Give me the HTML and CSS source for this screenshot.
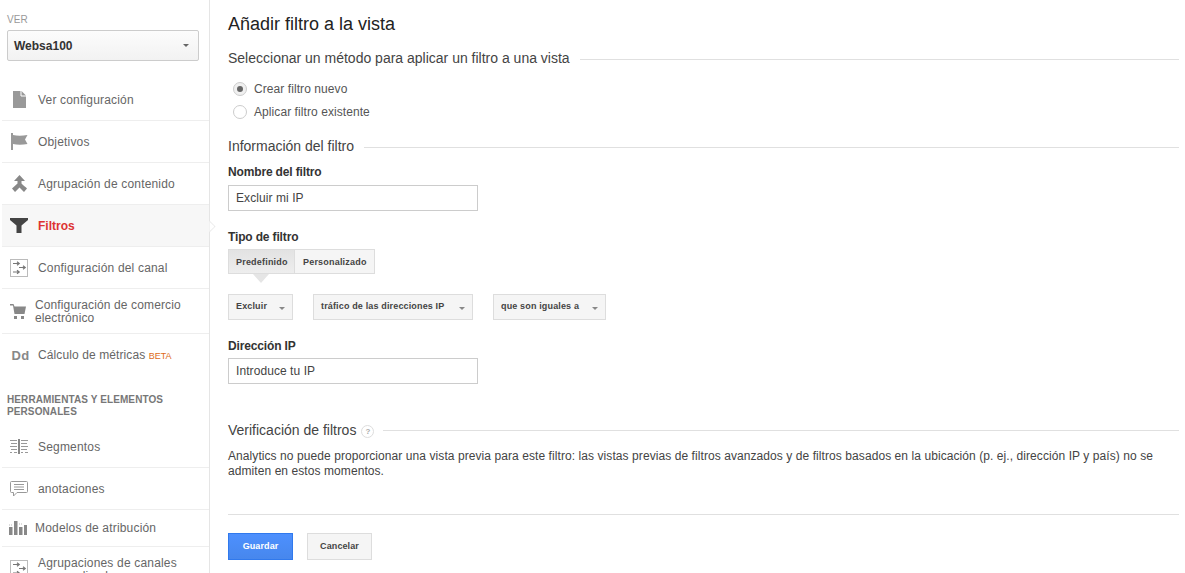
FILE: index.html
```html
<!DOCTYPE html>
<html lang="es">
<head>
<meta charset="utf-8">
<title>Añadir filtro a la vista</title>
<link rel="stylesheet" href="styles.css">
</head>
<body>
<div class="page">
  <aside class="sidebar">
    <div class="view-block">
      <div class="view-label">VER</div>
      <div class="view-select"><span>Websa100</span><i class="caret dark"></i></div>
    </div>
    <nav class="nav">
      <a class="row"><span class="ico"><svg width="13" height="17" viewBox="0 0 13 17"><path d="M0 0h8.500L13 4.500V17H0z" fill="#999"/><path d="M8 0v5h5" fill="none" stroke="#fff"/></svg></span><span class="lbl">Ver configuración</span></a>
      <a class="row"><span class="ico"><svg width="17" height="17" viewBox="0 0 17 17"><path d="M0 0h2v2c4 1 9 1 14.500 0l-2.500 4.500 2.500 4.500c-5 1-10.500 1-14.500 0v6H0z" fill="#999"/></svg></span><span class="lbl">Objetivos</span></a>
      <a class="row"><span class="ico"><svg width="15" height="17" viewBox="0 0 15 17"><path d="M7.500 0L13 6H9.500v2.500c2 2 4 3.500 5.500 5l-3 3.500-4.500-4.500L3 17 0 13.500l5.500-5V6H2z" fill="#888"/></svg></span><span class="lbl">Agrupación de contenido</span></a>
      <a class="row active"><span class="ico"><svg width="18" height="15" viewBox="0 0 18 15"><path d="M0 0h18v2l-6.500 5.500V15h-5V7.500L0 2z" fill="#444"/></svg></span><span class="lbl">Filtros</span></a>
      <a class="row"><span class="ico"><svg width="18" height="18" viewBox="0 0 18 18"><rect x=".5" y=".5" width="17" height="17" fill="#fff" stroke="#bbb"/><g fill="none" stroke="#777" stroke-width="1.200"><path d="M3 4.500h6M7 2.800l2.200 1.700L7 6.200"/><path d="M9 8.500h6M13 6.800l2.200 1.700L13 10.200"/><path d="M3 13h6M7 11.300l2.200 1.700L7 14.700"/></g></svg></span><span class="lbl">Configuración del canal</span></a>
      <a class="row tall"><span class="ico ico-narrow"><svg width="16" height="15" viewBox="0 0 16 15"><path d="M0 0h3.500l1 2.500H16L14.500 10h-10L3 1.500H0z" fill="#888"/><rect x="4" y="12" width="3" height="3" fill="#888"/><rect x="11" y="12" width="3" height="3" fill="#888"/></svg></span><span class="lbl">Configuración de comercio electrónico</span></a>
      <a class="row plain"><span class="ico dd">Dd</span><span class="lbl">Cálculo de métricas <em class="beta">BETA</em></span></a>
    </nav>
    <h4 class="tools">HERRAMIENTAS Y ELEMENTOS PERSONALES</h4>
    <nav class="nav">
      <a class="row"><span class="ico"><svg width="18" height="15" viewBox="0 0 18 15"><path d="M0 1.500h7M1 4.500h6M0 7.500h7M1 10.500h6M0 13.500h2M4 13.500h3M11 1.500h7M11 4.500h6M11 7.500h7M11 10.500h6M11 13.500h2M15 13.500h3" stroke="#999" fill="none"/><path d="M9 0v15" stroke="#888" stroke-width="2"/></svg></span><span class="lbl">Segmentos</span></a>
      <a class="row"><span class="ico"><svg width="18" height="16" viewBox="0 0 18 16"><path d="M1.500.5h15q1 0 1 1v9q0 1-1 1H7L3.500 15v-3.500h-2q-1 0-1-1v-9q0-1 1-1z" fill="#fff" stroke="#999"/><path d="M4 3.500h10M4 6h10M4 8.500h10" stroke="#999"/></svg></span><span class="lbl">anotaciones</span></a>
      <a class="row short"><span class="ico ico-narrow"><svg width="18" height="14" viewBox="0 0 18 14"><path d="M0 6h3.500v8H0zM5 0h3.500v14H5zM10 6h3.500v8H10zM15 4h3v10h-3z" fill="#888"/><path d="M0 4h3M10 3h3" stroke="#bbb" stroke-dasharray="1 1"/></svg></span><span class="lbl lbl-flat">Modelos de atribución</span></a>
      <a class="row last"><span class="ico"><svg width="18" height="18" viewBox="0 0 18 18"><rect x=".5" y=".5" width="17" height="17" fill="#fff" stroke="#bbb"/><g fill="none" stroke="#777" stroke-width="1.200"><path d="M3 4.500h6M7 2.800l2.200 1.700L7 6.200"/><path d="M9 8.500h6M13 6.800l2.200 1.700L13 10.200"/><path d="M3 13h6M7 11.300l2.200 1.700L7 14.700"/></g></svg></span><span class="lbl">Agrupaciones de canales personalizadas</span></a>
    </nav>
  </aside>
  <main class="main">
    <h1 class="title">Añadir filtro a la vista</h1>
    <div class="section s-method"><span>Seleccionar un método para aplicar un filtro a una vista</span></div>
    <div class="radios">
      <label class="radio"><i class="dot on"></i>Crear filtro nuevo</label>
      <label class="radio"><i class="dot"></i>Aplicar filtro existente</label>
    </div>
    <div class="section s-info"><span>Información del filtro</span></div>
    <div class="field-label">Nombre del filtro</div>
    <div class="input">Excluir mi IP</div>
    <div class="field-label type-label">Tipo de filtro</div>
    <div class="tabs">
      <div class="tab selected">Predefinido</div>
      <div class="tab">Personalizado</div>
    </div>
    <div class="selects">
      <div class="select w1"><span>Excluir</span><i class="caret"></i></div>
      <div class="select w2"><span>tráfico de las direcciones IP</span><i class="caret"></i></div>
      <div class="select w3"><span>que son iguales a</span><i class="caret"></i></div>
    </div>
    <div class="field-label ip-label">Dirección IP</div>
    <div class="input ip-input">Introduce tu IP</div>
    <div class="section s-verify"><span>Verificación de filtros</span><i class="help">?</i></div>
    <p class="note">Analytics no puede proporcionar una vista previa para este filtro: las vistas previas de filtros avanzados y de filtros basados en la ubicación (p. ej., dirección IP y país) no se admiten en estos momentos.</p>
    <div class="actions">
      <button class="btn primary">Guardar</button>
      <button class="btn">Cancelar</button>
    </div>
  </main>
</div>
</body>
</html>
```
FILE: styles.css
```css
* { box-sizing: border-box; }
html, body { margin: 0; height: 100%; overflow: hidden; background: #fff; }
body { font-family: "Liberation Sans", Arial, sans-serif; font-size: 12px; color: #333; letter-spacing: .075px; }
.page { display: flex; height: 573px; overflow: hidden; }

.sidebar { width: 210px; flex: none; border-right: 1px solid #e5e5e5; padding-left: 2px; height: 573px; }
.view-block { padding: 14px 10px 0 5px; height: 79px; }
.view-label { font-size: 10px; line-height: 12px; color: #999; }
.view-select { margin-top: 4px; height: 31px; border: 1px solid #ccc; border-radius: 2px; background: linear-gradient(#fcfcfc, #f2f2f2); display: flex; align-items: center; justify-content: space-between; padding: 0 9px 0 6px; font-weight: bold; color: #333; letter-spacing: 0; }
.caret { width: 0; height: 0; border: 3.500px solid transparent; border-top-color: #888; border-bottom: 0; }
.caret.dark { border-top-color: #666; }

.row { display: flex; align-items: center; height: 42px; border-bottom: 1px solid #eee; color: #666; line-height: 13px; letter-spacing: .18px; }
.row.tall { height: 45px; letter-spacing: .12px; }
.row.plain { border-bottom: 0; height: 42px; letter-spacing: .1px; }
.row.short { height: 37px; }
.row.last { height: 44px; border-bottom: 0; }
.row.active { background: #f7f7f7; color: #dd3333; font-weight: bold; letter-spacing: 0; position: relative; }
.row.active::after { content: ""; position: absolute; right: -6px; top: 16px; width: 10px; height: 10px; background: #fff; border-top: 1px solid #e0e0e0; border-right: 1px solid #e0e0e0; transform: rotate(45deg) scale(.8); clip-path: polygon(0 0, 100% 0, 100% 100%); }
.lbl { padding-top: 2px; }
.lbl-flat { padding-top: 0; }
.ico { width: 36px; flex: none; display: flex; align-items: center; justify-content: center; padding-right: 2px; }
.ico-narrow { width: 33px; }
.dd { font-weight: bold; font-size: 13px; color: #888; letter-spacing: .3px; padding-left: 3px; }
.beta { font-style: normal; font-size: 9px; color: #dd6b20; letter-spacing: 0; }
.tools { margin: 18px 10px 8px 5px; font-size: 10px; line-height: 12px; color: #777; font-weight: bold; letter-spacing: .1px; height: 24px; }

.main { flex: 1; min-width: 0; padding: 0 6px 0 18px; }
.title { margin: 14px 0 0; font-size: 18px; line-height: 20px; font-weight: normal; color: #222; letter-spacing: 0; }
.section { display: flex; align-items: center; font-size: 14px; line-height: 16px; color: #444; letter-spacing: 0; }
.section::after { content: ""; flex: 1; height: 1px; background: #e0e0e0; margin: 2px 0 0 10px; }
.s-method { margin-top: 16px; }
.radios { margin-top: 11px; padding-left: 5px; }
.radio { display: flex; align-items: center; height: 23px; color: #555; }
.dot { width: 14px; height: 14px; border: 1px solid #ccc; border-radius: 50%; margin-right: 7px; background: #fff; position: relative; flex: none; }
.dot.on { background: #f0f0f0; }
.dot.on::after { content: ""; position: absolute; left: 3px; top: 3px; width: 6px; height: 6px; border-radius: 50%; background: #666; }
.s-info { margin-top: 15px; }
.field-label { margin-top: 11px; font-weight: bold; color: #333; line-height: 14px; letter-spacing: -.15px; }
.input { margin-top: 6px; width: 250px; height: 26px; border: 1px solid #ccc; padding: 0 7px; line-height: 24px; color: #444; }
.type-label { margin-top: 19px; }
.tabs { display: flex; margin-top: 5px; width: 147px; }
.tab { height: 25px; padding: 0 7px; line-height: 24px; font-size: 9px; font-weight: bold; color: #444; border: 1px solid #ddd; background: #f5f5f5; position: relative; letter-spacing: .2px; }
.tab + .tab { border-left: 0; flex: 1; padding-left: 8px; }
.tab.selected { width: 67px; flex: none; background: linear-gradient(#e2e2e2, #eee); }
.tab.selected::after { content: ""; position: absolute; left: 24px; bottom: -10px; border: 8px solid transparent; border-top: 9px solid #e5e5e5; border-bottom: 0; }
.selects { display: flex; gap: 20px; margin-top: 20px; }
.select { height: 26px; border: 1px solid #ddd; background: #f5f5f5; display: flex; align-items: center; justify-content: space-between; padding: 0 7px; font-size: 9px; font-weight: bold; color: #444; letter-spacing: .15px; }
.select span { padding-bottom: 2px; }
.select .caret { margin-top: 2px; }
.w1 { width: 65px; }
.w2 { width: 160px; }
.w3 { width: 113px; }
.ip-label { margin-top: 19px; }
.ip-input { margin-top: 5px; }
.s-verify { margin-top: 37px; }
.help { width: 13px; height: 13px; border: 1px solid #ddd; border-radius: 50%; margin: 4px 0 0 5px; font-size: 8px; line-height: 11px; text-align: center; color: #aaa; font-style: normal; font-weight: bold; }
.s-verify::after { margin-left: 9px; }
.note { margin: 11px 0 0; line-height: 15px; color: #444; }
.actions { margin-top: 35px; border-top: 1px solid #e0e0e0; padding-top: 18px; display: flex; gap: 14px; }
.btn { width: 65px; height: 27px; border: 1px solid #ddd; background: #f5f5f5; font: bold 9px "Liberation Sans", Arial, sans-serif; letter-spacing: .1px; color: #444; padding: 0 0 2px; }
.btn.primary { background: linear-gradient(#4d90fe, #4787ed); border-color: #3079ed; color: #fff; }
```
